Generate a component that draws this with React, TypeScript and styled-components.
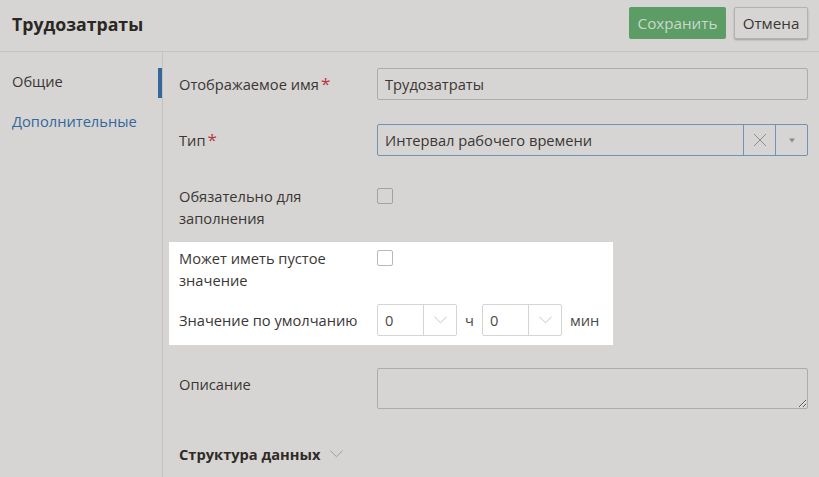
import React from "react";
import styled, { createGlobalStyle } from "styled-components";

const Global = createGlobalStyle`
  html, body { margin: 0; padding: 0; background: #d6d5d3; }
  body { font-family: "Open Sans", "Noto Sans", sans-serif; font-size: 14.66px; color: #3a3734; overflow: hidden; }
  * { box-sizing: border-box; }
`;

const Page = styled.div`
  width: 819px; height: 477px; overflow: hidden; background: #d6d5d3;
  display: flex; flex-direction: column;
`;
const Header = styled.header`
  height: 52px; flex: none; display: flex; align-items: flex-start; justify-content: space-between;
  padding: 7px 11px 0 12px; border-bottom: 1px solid #c4c3c1;
`;
const Title = styled.h1`
  margin: 5px 0 0; font-size: 17.7px; font-weight: 700; color: #2b2723; line-height: 24px;
`;
const Actions = styled.div`display: flex; gap: 8px; align-items: center;`;
const SaveButton = styled.button`
  height: 32px; width: 97px; padding: 0; border: 0; border-radius: 2px;
  background: #5c9d66; color: #c9d9c9; font: 15.2px "Open Sans", sans-serif;
`;
const CancelButton = styled.button`
  height: 32px; width: 74px; padding: 0; border: 1px solid #b3b2b0; border-radius: 2px;
  background: #d6d5d3; color: #3a3734; font: 15.2px "Open Sans", sans-serif;
  box-shadow: 0 1px 2px rgba(0,0,0,.25);
`;
const Body = styled.div`flex: 1; display: flex; min-height: 0;`;
const Side = styled.nav`
  width: 163px; flex: none; border-right: 1px solid #c4c3c1; padding-top: 16px;
  display: flex; flex-direction: column; gap: 10px;
`;
const SideItem = styled.div<{ $active?: boolean }>`
  height: 30px; line-height: 26px; padding-left: 12px;
  color: ${p => (p.$active ? "#3a3734" : "#33689a")};
  border-right: 4px solid ${p => (p.$active ? "#33689a" : "transparent")};
`;
const Main = styled.main`flex: 1; padding: 16px 11px 0 6px; display: flex; flex-direction: column;`;
const Row = styled.div<{ $mt?: number }>`
  display: flex; align-items: flex-start; padding-left: 10px;
  margin-top: ${p => p.$mt ?? 0}px;
`;
const Label = styled.label`
  width: 198px; flex: none; line-height: 22px; color: #3a3734; padding-top: 5px;
`;
const Req = styled.span`color: #b8343d; margin-left: 2px; font-size: 17px; line-height: 16px;`;
const Input = styled.div`
  flex: 1; height: 32px; line-height: 31px; padding: 0 7px; border: 1px solid #adacaa; border-radius: 2px;
  color: #3a3734;
`;
const Select = styled.div`
  flex: 1; height: 32px; display: flex; border: 1px solid #6e93b3; border-radius: 2px;
`;
const SelectValue = styled.div`flex: 1; padding: 0 7px; line-height: 31px; color: #3a3734;`;
const SelectBtn = styled.div`
  width: 32px; flex: none; border-left: 1px solid #6e93b3;
  display: flex; align-items: center; justify-content: center;
`;
const Check = styled.span<{ $light?: boolean }>`
  width: 16px; height: 16px; display: block; border-radius: 2px; flex: none; margin-top: 8px;
  border: 1px solid ${p => (p.$light ? "#b8b8b8" : "#a3a2a0")}; background: ${p => (p.$light ? "#fff" : "transparent")};
`;
const Highlight = styled.section`
  margin-top: 13px; width: 444px; height: 103px; background: #fff;
  display: flex; flex-direction: column;
`;
const Unit = styled.span<{ $w?: number; $ml?: number }>`
  line-height: 32px; color: #4a4a4a; text-align: center;
  ${p => (p.$w ? `width: ${p.$w}px;` : "")}
  margin-left: ${p => p.$ml ?? 0}px;
`;
const Spin = styled.div`
  width: 80px; height: 32px; display: flex; border: 1px solid #d4d4d4; border-radius: 2px; background: #fff; flex: none;
`;
const SpinValue = styled.div`flex: 1; padding-left: 7px; line-height: 31px; color: #4a4a4a;`;
const SpinBtn = styled.div`
  width: 33px; flex: none; border-left: 1px solid #d4d4d4; display: flex; align-items: center; justify-content: center;
`;
const TimeRow = styled.div`display: flex; align-items: flex-start;`;
const Textarea = styled.textarea`
  flex: 1; height: 41px; padding: 0; display: block; background: transparent; border: 1px solid #adacaa; border-radius: 2px;
  outline: none; margin: 0;
`;
const SectionTitle = styled.div`
  margin-top: 34px; padding-left: 10px; display: flex; align-items: center; gap: 10px; height: 22px;
  font-weight: 700; color: #2f2b27;
`;

const Chevron = ({ color, size = 14 }: { color: string; size?: number }) => (
  <svg width={size} height={size / 2 + 1} viewBox="0 0 14 8" fill="none">
    <path d="M.5.8 7 7.2 13.5.8" stroke={color} strokeWidth="1" />
  </svg>
);

const TimeSpin = ({ value }: { value: string }) => (
  <Spin>
    <SpinValue>{value}</SpinValue>
    <SpinBtn><Chevron color="#c0c0c0" size={13} /></SpinBtn>
  </Spin>
);

export default function App() {
  return (
    <Page>
      <Global />
      <Header>
        <Title>Трудозатраты</Title>
        <Actions>
          <SaveButton>Сохранить</SaveButton>
          <CancelButton>Отмена</CancelButton>
        </Actions>
      </Header>
      <Body>
        <Side>
          <SideItem $active>Общие</SideItem>
          <SideItem>Дополнительные</SideItem>
        </Side>
        <Main>
          <Row>
            <Label>Отображаемое имя<Req>*</Req></Label>
            <Input>Трудозатраты</Input>
          </Row>
          <Row $mt={24}>
            <Label>Тип<Req>*</Req></Label>
            <Select>
              <SelectValue>Интервал рабочего времени</SelectValue>
              <SelectBtn>
                <svg width="14" height="14" viewBox="0 0 14 14" fill="none">
                  <path d="M1 1l12 12M13 1 1 13" stroke="#8f8f8e" strokeWidth="1" />
                </svg>
              </SelectBtn>
              <SelectBtn>
                <svg width="8" height="5" viewBox="0 0 8 5"><path d="M1 .5h6L4 4.5z" fill="#8a8a89" /></svg>
              </SelectBtn>
            </Select>
          </Row>
          <Row $mt={24}>
            <Label>Обязательно для<br />заполнения</Label>
            <Check />
          </Row>
          <Highlight>
            <Row>
              <Label>Может иметь пустое<br />значение</Label>
              <Check $light />
            </Row>
            <Row $mt={13}>
              <Label>Значение по умолчанию</Label>
              <TimeRow>
                <TimeSpin value="0" />
                <Unit $w={25}>ч</Unit>
                <TimeSpin value="0" />
                <Unit $ml={8}>мин</Unit>
              </TimeRow>
            </Row>
          </Highlight>
          <Row $mt={23}>
            <Label>Описание</Label>
            <Textarea readOnly />
          </Row>
          <SectionTitle>
            Структура данных
            <Chevron color="#9a9997" size={13} />
          </SectionTitle>
        </Main>
      </Body>
    </Page>
  );
}
